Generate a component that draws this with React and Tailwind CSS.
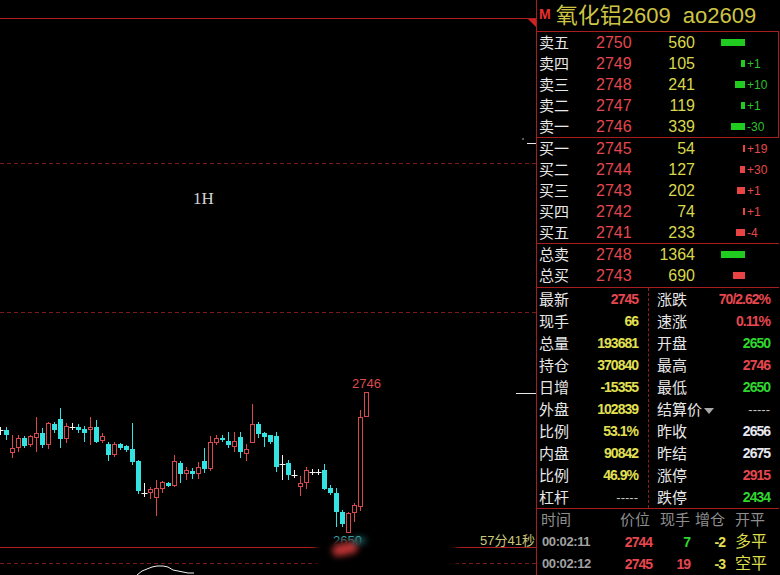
import React from 'react';

const RED = '#d84a4a';
const CYAN = '#34e2e2';

// [type, high, bodyTop, bodyBottom, low]  r = up (hollow), c = down (filled), w = doji
const candles = [
  ['w', 427, 430, 430, 435],
  ['c', 427, 430, 435, 440],
  ['r', 435, 448, 453, 458],
  ['r', 435, 438, 448, 452],
  ['c', 436, 438, 446, 448],
  ['r', 435, 436, 445, 447],
  ['r', 417, 433, 438, 452],
  ['c', 428, 433, 445, 448],
  ['r', 422, 423, 445, 449],
  ['c', 422, 424, 430, 433],
  ['c', 408, 419, 439, 448],
  ['r', 423, 426, 439, 443],
  ['w', 423, 427, 427, 430],
  ['c', 424, 427, 430, 433],
  ['c', 426, 429, 433, 442],
  ['r', 417, 427, 430, 445],
  ['c', 420, 427, 442, 443],
  ['r', 433, 436, 441, 443],
  ['c', 442, 444, 455, 461],
  ['r', 442, 444, 455, 457],
  ['c', 443, 444, 448, 450],
  ['c', 445, 446, 450, 452],
  ['c', 423, 449, 462, 465],
  ['c', 460, 461, 491, 494],
  ['w', 483, 493, 493, 497],
  ['r', 487, 489, 493, 499],
  ['r', 480, 488, 498, 516],
  ['r', 481, 482, 489, 493],
  ['c', 482, 483, 486, 487],
  ['r', 455, 461, 486, 487],
  ['c', 461, 463, 474, 483],
  ['r', 467, 470, 474, 480],
  ['c', 468, 471, 474, 479],
  ['r', 462, 467, 474, 479],
  ['c', 448, 461, 469, 473],
  ['r', 436, 442, 469, 471],
  ['r', 435, 438, 443, 445],
  ['c', 435, 438, 440, 442],
  ['c', 432, 441, 445, 448],
  ['r', 432, 441, 447, 452],
  ['c', 432, 437, 452, 458],
  ['r', 444, 449, 454, 461],
  ['r', 404, 424, 443, 443],
  ['c', 422, 424, 434, 438],
  ['c', 432, 433, 437, 447],
  ['c', 435, 435, 442, 444],
  ['c', 432, 436, 467, 472],
  ['w', 455, 464, 464, 480],
  ['c', 460, 463, 475, 480],
  ['w', 470, 475, 475, 478],
  ['r', 476, 483, 487, 496],
  ['r', 467, 470, 483, 489],
  ['w', 469, 472, 472, 475],
  ['w', 469, 472, 472, 475],
  ['c', 464, 470, 489, 490],
  ['c', 485, 488, 493, 495],
  ['c', 488, 493, 512, 527],
  ['c', 510, 512, 524, 527],
  ['r', 512, 513, 533, 533],
  ['r', 503, 505, 513, 522],
  ['r', 410, 417, 507, 511],
  ['r', 392, 392, 417, 417],
];

const Candle = ({ c, i }) => {
  const x = 0.5 + i * 6;
  const [t, hi, top, bot, lo] = c;
  if (t === 'w') {
    return (
      <g stroke="#f2f2f2">
        <line x1={x} x2={x} y1={hi} y2={lo} />
        <line x1={x - 3} x2={x + 3} y1={top + 0.5} y2={top + 0.5} />
      </g>
    );
  }
  if (t === 'c') {
    return (
      <g>
        <line x1={x} x2={x} y1={hi} y2={lo} stroke={CYAN} />
        <rect x={x - 2.5} y={top} width={5} height={Math.max(bot - top, 1)} fill={CYAN} />
      </g>
    );
  }
  return (
    <g stroke={RED} fill="none">
      {hi < top && <line x1={x} x2={x} y1={hi} y2={top} />}
      {lo > bot && <line x1={x} x2={x} y1={bot} y2={lo} />}
      <rect x={x - 2} y={top + 0.5} width={4} height={Math.max(bot - top - 1, 1)} />
    </g>
  );
};

const Chart = () => (
  <div className="relative h-[575px] w-[536px] shrink-0">
    <svg width="536" height="575" className="block">
      <line x1="0" x2="536" y1="18.5" y2="18.5" stroke="#b01e1e" />
      <polygon points="528,19 536,19 536,27" fill="#d02222" />
      <line x1="0" x2="536" y1="163.5" y2="163.5" stroke="#7c1a1a" strokeDasharray="4 3" />
      <line x1="0" x2="536" y1="312.5" y2="312.5" stroke="#7c1a1a" strokeDasharray="4 3" />
      <line x1="527" x2="536" y1="143.5" y2="143.5" stroke="#e8e8e8" />
      <circle cx="523" cy="139" r="1" fill="#777" />
      <line x1="516" x2="536" y1="393.5" y2="393.5" stroke="#e8e8e8" />
      <line x1="0" x2="536" y1="547.5" y2="547.5" stroke="#b01e1e" />
      <line x1="0" x2="536" y1="563.5" y2="563.5" stroke="#7c1a1a" strokeDasharray="4 3" />
      <polyline
        points="137,575 142,571 147,569 152,567 157,566 163,566 168,567 173,570 178,571 183,572 188,573 194,573"
        fill="none"
        stroke="#f0f0f0"
      />
      <text x="193" y="204" fill="#d4d4d4" fontSize="17" fontFamily="'Liberation Serif', serif">1H</text>
      {candles.map((c, i) => (
        <Candle key={i} c={c} i={i} />
      ))}
      <text x="352" y="388" fill="#dc4a4a" fontSize="13" fontFamily="'Liberation Sans', sans-serif">2746</text>
      <text x="333" y="545" fill="#3ec4c8" fontSize="13" fontFamily="'Liberation Sans', sans-serif">2650</text>
      <text x="480" y="545" fill="#c9c87a" fontSize="13" fontFamily="'Liberation Sans', 'Noto Sans CJK SC', sans-serif">57分41秒</text>
    </svg>
    {/* smudged patch under the low-price label */}
    <div className="absolute left-[316px] top-[540px] h-[40px] w-[140px] bg-black blur-[3px]" />
    <div className="absolute left-[332px] top-[543px] h-[12px] w-[26px] -rotate-12 rounded-full bg-[#b83232] blur-[3px]" />
    <div className="absolute left-[352px] top-[537px] h-[7px] w-[14px] rounded-full bg-[#2f8a8c] opacity-60 blur-[3px]" />
  </div>
);

const sells = [
  ['卖五', 2750, 560, 24, ''],
  ['卖四', 2749, 105, 4, '+1'],
  ['卖三', 2748, 241, 10, '+10'],
  ['卖二', 2747, 119, 4, '+1'],
  ['卖一', 2746, 339, 14, '-30'],
];

const buys = [
  ['买一', 2745, 54, 2, '+19'],
  ['买二', 2744, 127, 5, '+30'],
  ['买三', 2743, 202, 8, '+1'],
  ['买四', 2742, 74, 2, '+1'],
  ['买五', 2741, 233, 9, '-4'],
];

const BookRow = ({ label, price, vol, bar, delta, barClass, deltaClass }) => (
  <div className="flex h-[21px] items-center leading-none">
    <span className="w-[59px] pl-[2px] text-[15px] text-[#e8e8e8]">{label}</span>
    <span className="w-[60px] text-[#e2474f]">{price}</span>
    <span className="w-[39px] text-right text-[#d9d84c]">{vol}</span>
    <span className="flex w-[50px] justify-end">
      <span className={`h-[7px] ${barClass}`} style={{ width: bar }} />
    </span>
    <span className={`ml-[2px] text-[12px] ${deltaClass}`}>{delta}</span>
  </div>
);

const YEL = 'text-[#e2e052]';
const RD = 'text-[#e6474f]';
const GR = 'text-[#2fd62f]';
const WH = 'text-[#e8e8f2]';
const GY = 'text-[#b4b4b4]';

const leftStats = [
  ['最新', '2745', RD],
  ['现手', '66', YEL],
  ['总量', '193681', YEL],
  ['持仓', '370840', YEL],
  ['日增', '-15355', YEL],
  ['外盘', '102839', YEL],
  ['比例', '53.1%', YEL],
  ['内盘', '90842', YEL],
  ['比例', '46.9%', YEL],
  ['杠杆', '-----', GY],
];

const rightStats = [
  ['涨跌', '70/2.62%', RD],
  ['速涨', '0.11%', RD],
  ['开盘', '2650', GR],
  ['最高', '2746', RD],
  ['最低', '2650', GR],
  ['结算价', '-----', WH, true],
  ['昨收', '2656', WH],
  ['昨结', '2675', WH],
  ['涨停', '2915', RD],
  ['跌停', '2434', GR],
];

const StatRow = ({ label, value, color, arrow, pad }) => (
  <div className={`flex h-[22px] items-center justify-between leading-none ${pad}`}>
    <span className="flex items-center text-[15px] text-[#e8e8e8]">
      {label}
      {arrow && (
        <svg width="10" height="6" viewBox="0 0 10 6" className="ml-[2px] mt-[3px]">
          <polygon points="0,0 10,0 5,6" fill="#a8a8a8" />
        </svg>
      )}
    </span>
    {value === '-----' ? (
      <span className="text-[13px] text-[#c4c4c4]">{value}</span>
    ) : (
      <span className={`text-[14px] font-bold tracking-[-1px] ${color}`}>{value}</span>
    )}
  </div>
);

const trades = [
  ['00:02:11', '2744', '7', GR, '-2', '多平'],
  ['00:02:12', '2745', '19', RD, '-3', '空平'],
];

const Panel = () => (
  <div className="flex h-[575px] w-[243px] shrink-0 flex-col border-l border-[#a81e1e] text-[16px]">
    <div className="flex h-[32px] shrink-0 items-center border-b border-[#a81e1e] leading-none">
      <span className="ml-[2px] -mt-[4px] text-[14px] font-bold text-[#e83030]">M</span>
      <span className="ml-[5px] text-[22px] text-[#cdc444]">氧化铝2609&nbsp;&nbsp;ao2609</span>
    </div>
    <div className="border-b border-r border-[#a81e1e]">
      {sells.map(([l, p, v, b, d]) => (
        <BookRow key={l} label={l} price={p} vol={v} bar={b} delta={d} barClass="bg-[#1fcc1f]" deltaClass="text-[#2cc22c]" />
      ))}
    </div>
    <div className="border-b border-[#a81e1e]">
      {buys.map(([l, p, v, b, d]) => (
        <BookRow key={l} label={l} price={p} vol={v} bar={b} delta={d} barClass="bg-[#e84444]" deltaClass="text-[#e04a4a]" />
      ))}
    </div>
    <div className="border-b border-[#a81e1e] pb-[1px]">
      <BookRow label="总卖" price={2748} vol={1364} bar={24} delta="" barClass="bg-[#1fcc1f]" deltaClass="" />
      <BookRow label="总买" price={2743} vol={690} bar={12} delta="" barClass="bg-[#e84444]" deltaClass="" />
    </div>
    <div className="flex border-b border-[#a81e1e]">
      <div className="w-[112px] border-r border-dashed border-[#8e1e1e]">
        {leftStats.map(([l, v, c], i) => (
          <StatRow key={i} label={l} value={v} color={c} pad="pl-[2px] pr-[10px]" />
        ))}
      </div>
      <div className="flex-1">
        {rightStats.map(([l, v, c, a], i) => (
          <StatRow key={i} label={l} value={v} color={c} arrow={a} pad="pl-[8px] pr-[9px]" />
        ))}
      </div>
    </div>
    <div className="flex h-[22px] items-center text-[15px] leading-none text-[#8e8e8e]">
      <span className="w-[63px] pl-[4px]">时间</span>
      <span className="w-[50px] text-right">价位</span>
      <span className="w-[40px] text-right">现手</span>
      <span className="w-[35px] text-right">增仓</span>
      <span className="pl-[10px]">开平</span>
    </div>
    {trades.map(([t, p, n, nc, z, k]) => (
      <div key={t} className="flex h-[23px] items-center leading-none">
        <span className="w-[63px] pl-[5px] text-[13px] font-bold tracking-[-0.4px] text-[#a2a2a2]">{t}</span>
        <span className={`w-[52px] text-right text-[14px] font-bold tracking-[-1px] ${RD}`}>{p}</span>
        <span className={`w-[38px] text-right text-[14px] font-bold tracking-[-1px] ${nc}`}>{n}</span>
        <span className={`w-[35px] text-right text-[14px] font-bold tracking-[-1px] ${YEL}`}>{z}</span>
        <span className="pl-[10px] text-[16px] text-[#dede4c]">{k}</span>
      </div>
    ))}
  </div>
);

export default function App() {
  return (
    <div className="flex h-[575px] w-[780px] overflow-hidden bg-black font-['Liberation_Sans','Noto_Sans_CJK_SC',sans-serif]">
      <Chart />
      <Panel />
    </div>
  );
}
